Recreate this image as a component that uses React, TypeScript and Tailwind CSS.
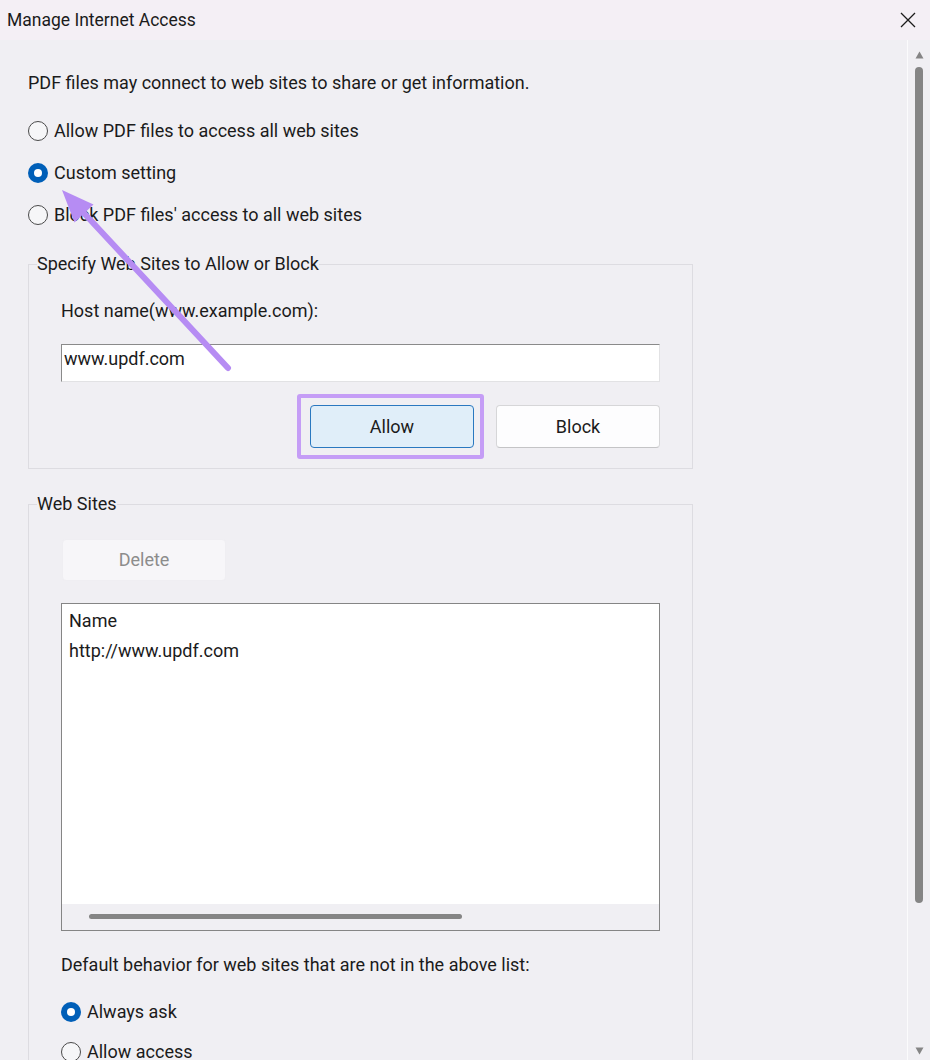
import React from 'react';

function Radio({ label, checked }: { label: string; checked?: boolean }) {
  return (
    <div className="flex items-center gap-[6px] h-[24px]">
      {checked ? (
        <span className="w-[20px] h-[20px] rounded-full bg-[#005fb8] flex items-center justify-center">
          <span className="w-[8px] h-[8px] rounded-full bg-white" />
        </span>
      ) : (
        <span className="w-[20px] h-[20px] rounded-full border border-[#4a4a4a] bg-[#f6f6f8]" />
      )}
      <span>{label}</span>
    </div>
  );
}

function ScrollArrow({ down }: { down?: boolean }) {
  return (
    <svg width="9" height="8" viewBox="0 0 9 8" className="mx-auto">
      {down ? (
        <path d="M0.5 0.5 H8.5 L4.5 7.5 Z" fill="#858585" />
      ) : (
        <path d="M4.5 0.5 L8.5 7.5 H0.5 Z" fill="#858585" />
      )}
    </svg>
  );
}

export default function App() {
  return (
    <div className="relative w-[930px] h-[1060px] overflow-hidden bg-[#f0eff3] font-['Roboto',sans-serif] text-[18px] leading-[24px] text-[#1b1b1b]">
      {/* Title bar */}
      <div className="h-[40px] flex items-center justify-between bg-[#f4eff5] pl-[7px] pr-[14px]">
        <span className="text-[17.5px]">Manage Internet Access</span>
        <svg width="16" height="16" viewBox="0 0 16 16">
          <path d="M1 1 L15 15 M15 1 L1 15" stroke="#1b1b1b" strokeWidth="1.3" />
        </svg>
      </div>

      <div className="flex h-[1020px]">
        {/* Content */}
        <div className="w-[907px] pl-[28px] pt-[31px]">
          <p>PDF files may connect to web sites to share or get information.</p>

          <div className="mt-[24px] flex flex-col gap-[18px]">
            <Radio label="Allow PDF files to access all web sites" />
            <Radio label="Custom setting" checked />
            <Radio label="Block PDF files' access to all web sites" />
          </div>

          {/* Specify group */}
          <fieldset className="mt-[25px] w-[665px] border border-[#dddce1] px-[8px] pb-[20px]">
            <legend>Specify Web Sites to Allow or Block</legend>
            <div className="px-[24px]">
              <div className="mt-[23px]">Host name(www.example.com):</div>
              <div className="mt-[21px] h-[38px] bg-white border border-[#e2e2e4] border-t-[#8a8a8a] border-l-[#8a8a8a] pl-[2px] pt-[2px]">
                www.updf.com
              </div>
              <div className="mt-[23px] flex justify-end gap-[22px]">
                <div className="relative">
                  <button className="w-[164px] h-[43px] rounded-[4px] bg-[#e0eef9] border border-[#2a78c0]">
                    Allow
                  </button>
                  <div className="absolute -left-[13px] -right-[10px] -top-[11px] -bottom-[11px] border-4 border-[#c59df6] rounded-[3px] pointer-events-none" />
                </div>
                <button className="w-[164px] h-[43px] rounded-[4px] bg-[#fdfdfe] border border-[#d6d6d8] border-b-[#c4c4c6]">
                  Block
                </button>
              </div>
            </div>
          </fieldset>

          {/* Web sites group */}
          <fieldset className="mt-[23px] w-[665px] border border-[#dddce1] px-[8px] pb-[20px]">
            <legend>Web Sites</legend>
            <div className="px-[24px]">
              <button className="mt-[23px] ml-[1px] w-[164px] h-[42px] rounded-[4px] bg-[#f7f6f9] border border-[#efeef2] text-[#8c8c8c]">
                Delete
              </button>
              <div className="mt-[22px] h-[328px] border border-[#858585] bg-white flex flex-col">
                <div className="flex-1 pl-[7px] pt-[5px] flex flex-col gap-[6px]">
                  <div>Name</div>
                  <div>http://www.updf.com</div>
                </div>
                <div className="h-[26px] bg-[#f0eff3] pl-[27px] pt-[10px]">
                  <div className="w-[373px] h-[5px] rounded-full bg-[#858585]" />
                </div>
              </div>
              <div className="mt-[22px]">Default behavior for web sites that are not in the above list:</div>
              <div className="mt-[23px] flex flex-col gap-[16px]">
                <Radio label="Always ask" checked />
                <Radio label="Allow access" />
              </div>
            </div>
          </fieldset>
        </div>

        {/* Vertical scrollbar */}
        <div className="w-[23px] border-l border-[#fbfbfc] flex flex-col pt-[11px] pb-[5px]">
          <ScrollArrow />
          <div className="mt-[8px] mx-auto w-[8px] h-[836px] rounded-full bg-[#858585]" />
          <div className="flex-1" />
          <ScrollArrow down />
        </div>
      </div>

      {/* Annotation arrow */}
      <svg className="absolute inset-0 pointer-events-none" width="930" height="1060">
        <line x1="228" y1="368" x2="82" y2="211" stroke="#b68cf3" strokeWidth="6" strokeLinecap="round" />
        <polygon points="62,190 93.5,204.5 74.5,222.5" fill="#b68cf3" />
      </svg>
    </div>
  );
}
